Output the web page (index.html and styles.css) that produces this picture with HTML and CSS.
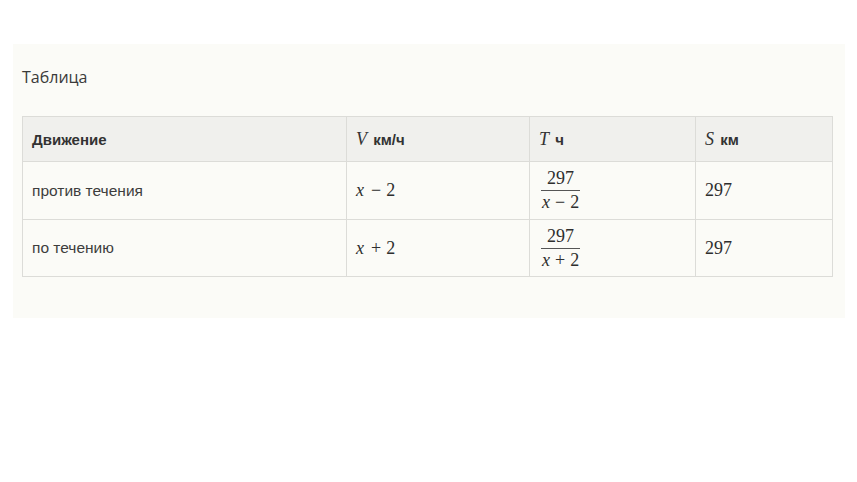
FILE: index.html
```html
<!DOCTYPE html>
<html lang="ru">
<head>
<meta charset="utf-8">
<link rel="stylesheet" href="styles.css">
</head>
<body>
<div class="panel">
  <div class="title">Таблица</div>
  <table class="tbl">
    <colgroup>
      <col class="c1"><col class="c2"><col class="c3"><col class="c4">
    </colgroup>
    <thead>
      <tr>
        <th>Движение</th>
        <th><span class="mi">V</span> км/ч</th>
        <th><span class="mi">T</span> ч</th>
        <th><span class="mi">S</span> км</th>
      </tr>
    </thead>
    <tbody>
      <tr class="r1">
        <td>против течения</td>
        <td><span class="math"><span class="mi">x</span><span class="mo">−</span>2</span></td>
        <td><span class="frac"><span class="num">297</span><span class="den"><span class="mi">x</span><span class="mo">−</span>2</span></span></td>
        <td><span class="math">297</span></td>
      </tr>
      <tr class="r2">
        <td>по течению</td>
        <td><span class="math"><span class="mi">x</span><span class="mo">+</span>2</span></td>
        <td><span class="frac"><span class="num">297</span><span class="den"><span class="mi">x</span><span class="mo">+</span>2</span></span></td>
        <td><span class="math">297</span></td>
      </tr>
    </tbody>
  </table>
</div>
</body>
</html>
```
FILE: styles.css
```css
html, body {
  margin: 0;
  padding: 0;
  background: #ffffff;
}
.panel {
  margin: 44px 0 0 13px;
  width: 832px;
  height: 274px;
  box-sizing: border-box;
  padding: 22px 13px 0 9px;
  background: #fbfbf7;
  color: #333;
}
.title {
  font-family: "Open Sans", "Noto Sans", sans-serif;
  font-size: 16px;
  line-height: 22px;
  color: #3a3a3a;
  margin-bottom: 28px;
}
.tbl {
  border-collapse: collapse;
  width: 810px;
  table-layout: fixed;
  font-family: "Liberation Sans", Arial, sans-serif;
  font-size: 15.5px;
  color: #3d3d3d;
}
.c1 { width: 324px; }
.c2 { width: 183px; }
.c3 { width: 166px; }
.c4 { width: 137px; }
.tbl th, .tbl td {
  border: 1px solid #dcdcd8;
  text-align: left;
  padding: 0 9px;
  vertical-align: middle;
}
.tbl th {
  height: 44px;
  background: #f0f0ed;
  font-weight: bold;
  color: #333;
  font-size: 15px;
}
.tbl td { background: #fbfbf7; }
.r1 td { height: 57px; }
.r2 td { height: 56px; }
.mi {
  font-family: "Liberation Serif", "Times New Roman", serif;
  font-style: italic;
  font-weight: normal;
  font-size: 18px;
  margin-right: 2px;
}
.math {
  font-family: "Liberation Serif", "Times New Roman", serif;
  font-size: 18px;
  color: #2e2e2e;
}
.mo {
  margin: 0 5px;
}
.frac {
  display: inline-flex;
  flex-direction: column;
  align-items: center;
  vertical-align: middle;
  margin-left: 2px;
  font-family: "Liberation Serif", "Times New Roman", serif;
  font-size: 18px;
  color: #2e2e2e;
  line-height: 21px;
}
.num {
  padding: 0 2px 1px;
}
.den {
  border-top: 1.5px solid #555;
  padding: 1px 1px 0;
}
.den .mi { margin-right: 0; }
```
